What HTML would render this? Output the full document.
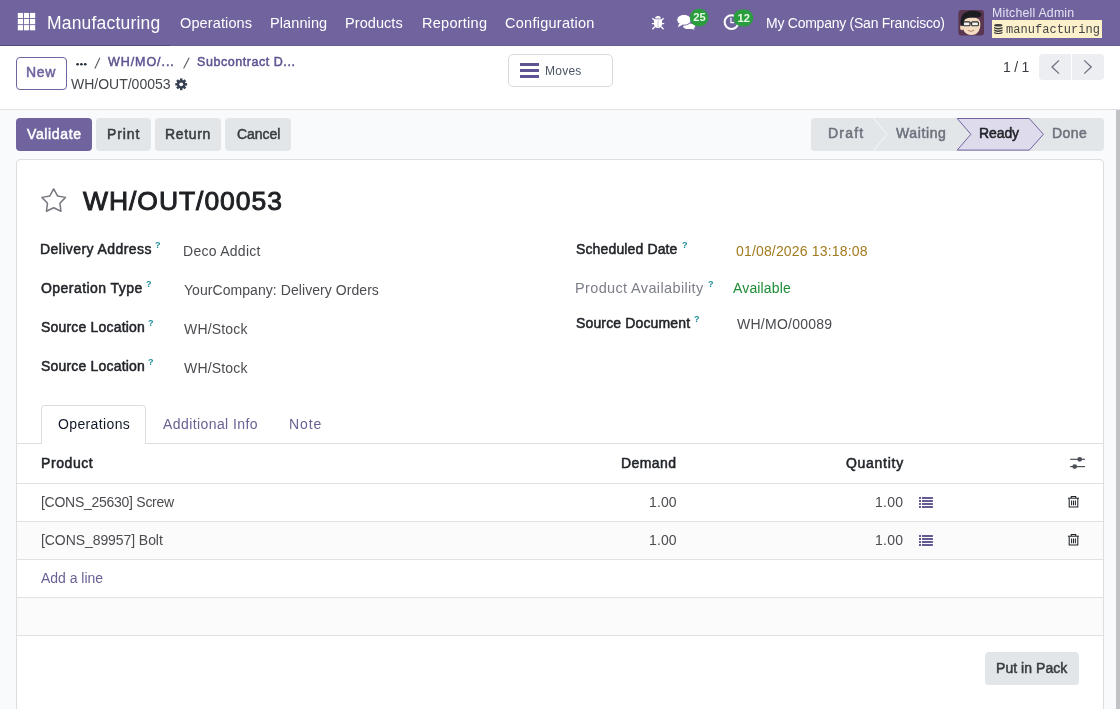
<!DOCTYPE html>
<html><head><meta charset="utf-8">
<style>
*{box-sizing:border-box;margin:0;padding:0}
html,body{width:1120px;height:709px;overflow:hidden;background:#fff;font-family:"Liberation Sans",sans-serif;color:#374151}
.a{position:absolute;white-space:nowrap}
.t{position:absolute;white-space:nowrap}
</style></head><body>

<div class="a" style="left:0;top:0;width:1120px;height:46px;background:#71639e"></div>
<div class="a" style="left:0;top:45px;width:1120px;height:1px;background:#6a5d97"></div>
<div class="a" style="left:0;top:45px;width:170px;height:1px;background:#55487f"></div>
<div class="a" style="left:0;top:109px;width:1120px;height:1px;background:#dfe1e5"></div>
<div class="a" style="left:0;top:110px;width:1116px;height:599px;background:#f9fafb"></div>
<div class="a" style="left:1116px;top:110px;width:4px;height:599px;background:#c1c2c5"></div>
<svg class="a" style="left:0;top:0" width="60" height="46" fill="#fff"><rect x="17.8" y="12.9" width="5.2" height="5.2"/><rect x="17.8" y="19.0" width="5.2" height="5.2"/><rect x="17.8" y="25.1" width="5.2" height="5.2"/><rect x="23.9" y="12.9" width="5.2" height="5.2"/><rect x="23.9" y="19.0" width="5.2" height="5.2"/><rect x="23.9" y="25.1" width="5.2" height="5.2"/><rect x="30.0" y="12.9" width="5.2" height="5.2"/><rect x="30.0" y="19.0" width="5.2" height="5.2"/><rect x="30.0" y="25.1" width="5.2" height="5.2"/></svg>
<svg class="a" style="left:646px;top:10px" width="24" height="24" viewBox="646 10 24 24">
<path d="M655.1 18.6 a2.9 2.5 0 0 1 5.8 0 z" fill="#fff"/>
<path d="M654.0 19.3 h8.0 v4.8 a4.0 3.9 0 0 1 -8.0 0 z" fill="#fff"/>
<line x1="658" y1="20.2" x2="658" y2="27.6" stroke="#b9b2d2" stroke-width="0.8"/>
<g stroke="#fff" stroke-width="1.3" stroke-linecap="butt">
<line x1="651.8" y1="23.6" x2="654.2" y2="23.6"/><line x1="661.8" y1="23.6" x2="664.2" y2="23.6"/>
<line x1="652.4" y1="18.2" x2="654.6" y2="20.4"/><line x1="663.6" y1="18.2" x2="661.4" y2="20.4"/>
<line x1="652.4" y1="29.2" x2="654.8" y2="26.8"/><line x1="663.6" y1="29.2" x2="661.2" y2="26.8"/>
</g></svg>
<svg class="a" style="left:670px;top:6px;will-change:transform" width="45" height="30" viewBox="670 6 45 30">
<path d="M683.5 24.2 C686 23.2 691 23 694 24.6 C696 25.8 695.5 27.6 693.6 28.2 L695 29.6 L690.8 28.9 C688 29.4 684.5 28.8 683.2 27.2 z" fill="#fff"/>
<ellipse cx="684" cy="19.8" rx="7.2" ry="5.4" fill="#fff" stroke="#71639e" stroke-width="0.9"/>
<path d="M679.2 23.6 L677.9 27.2 L683 24.6 z" fill="#fff"/>
<rect x="689.8" y="8.8" width="18.6" height="17.6" rx="8.8" fill="#2a9d3e"/>
<text x="699.6" y="21.1" font-family="Liberation Sans" font-weight="bold" font-size="11.2" fill="#eafbe6" text-anchor="middle">25</text>
</svg>
<svg class="a" style="left:716px;top:6px;will-change:transform" width="42" height="30" viewBox="716 6 42 30">
<circle cx="731.5" cy="22.1" r="6.9" fill="none" stroke="#fff" stroke-width="2"/>
<path d="M730.9 17.8 v4.9 h3.2" fill="none" stroke="#fff" stroke-width="1.15"/>
<rect x="733.4" y="9.6" width="19.8" height="17" rx="8.5" fill="#2a9d3e"/>
<text x="743.7" y="22" font-family="Liberation Sans" font-weight="bold" font-size="11.2" fill="#eafbe6" text-anchor="middle">12</text>
</svg>
<svg class="a" style="left:958px;top:10px" width="26" height="26" viewBox="0 0 26 26">
<rect x="0.4" y="0" width="25.6" height="25.5" rx="3" fill="#5b3651"/>
<ellipse cx="3.9" cy="17.6" rx="1.9" ry="2.6" fill="#f1d6b8"/>
<path d="M4.2 13 C4.2 9 7 7.5 13 7.5 C19.5 7.5 22.3 9 22.3 14 C22.3 20 20 25 13.2 25 C7 25 4.2 20 4.2 13 z" fill="#f4dcc2"/>
<path d="M2.8 14 C2 8 4 2.5 10.5 1.2 C16 0.3 22 1 23.5 4 C24 6 22 7.2 19.5 7.3 C15 7.6 9.5 7.2 7 9.5 C5.8 11 5.4 13 5.3 15.5 L3.4 16 z" fill="#1c1c21"/>
<rect x="5.4" y="11.9" width="6.6" height="3.9" rx="1" fill="#f2f2f2" stroke="#2b2b2b" stroke-width="1.1"/>
<rect x="13.6" y="11.9" width="6.8" height="3.9" rx="1" fill="#f2f2f2" stroke="#2b2b2b" stroke-width="1.1"/>
<line x1="12" y1="13" x2="13.6" y2="13" stroke="#2b2b2b" stroke-width="1"/>
<path d="M9.8 20.3 q3.2 2.2 6.4 0" fill="none" stroke="#a8795f" stroke-width="0.9"/>
</svg>
<div class="a" style="left:991.7px;top:20px;width:110.3px;height:18.3px;background:#fdf1cc"></div>
<svg class="a" style="left:993px;top:23px" width="11" height="12" viewBox="993 23 11 12" fill="#3b3b3b">
<ellipse cx="998.3" cy="25.3" rx="4.2" ry="1.3"/>
<path d="M994.1 26.6 v1.5 c0 .7 1.9 1.3 4.2 1.3 s4.2-.6 4.2-1.3 v-1.5 c0 .7-1.9 1.3-4.2 1.3 s-4.2-.6-4.2-1.3z"/>
<path d="M994.1 29.1 v1.5 c0 .7 1.9 1.3 4.2 1.3 s4.2-.6 4.2-1.3 v-1.5 c0 .7-1.9 1.3-4.2 1.3 s-4.2-.6-4.2-1.3z"/>
<path d="M994.1 31.6 v1.2 c0 .7 1.9 1.3 4.2 1.3 s4.2-.6 4.2-1.3 v-1.2 c0 .7-1.9 1.3-4.2 1.3 s-4.2-.6-4.2-1.3z"/>
</svg>
<div class="a" style="left:16px;top:57px;width:51px;height:33px;border:1px solid #71639e;border-radius:4px"></div>
<svg class="a" style="left:70px;top:55px" width="130" height="20" viewBox="70 55 130 20"><circle cx="77.6" cy="64.3" r="1.3" fill="#1f2937"/><circle cx="81.4" cy="64.3" r="1.3" fill="#1f2937"/><circle cx="85.2" cy="64.3" r="1.3" fill="#1f2937"/><line x1="99.9" y1="57.8" x2="94.9" y2="68.4" stroke="#555a62" stroke-width="1.1"/><line x1="189.2" y1="57.8" x2="183.6" y2="68.4" stroke="#555a62" stroke-width="1.1"/></svg>
<svg class="a" style="left:170px;top:74px" width="22" height="20" viewBox="170 74 22 20"><g fill="#374151"><circle cx="181.2" cy="84.3" r="4.3"/><rect x="179.95" y="78.39999999999999" width="2.5" height="3" transform="rotate(0 181.2 84.3)"/><rect x="179.95" y="78.39999999999999" width="2.5" height="3" transform="rotate(45 181.2 84.3)"/><rect x="179.95" y="78.39999999999999" width="2.5" height="3" transform="rotate(90 181.2 84.3)"/><rect x="179.95" y="78.39999999999999" width="2.5" height="3" transform="rotate(135 181.2 84.3)"/><rect x="179.95" y="78.39999999999999" width="2.5" height="3" transform="rotate(180 181.2 84.3)"/><rect x="179.95" y="78.39999999999999" width="2.5" height="3" transform="rotate(225 181.2 84.3)"/><rect x="179.95" y="78.39999999999999" width="2.5" height="3" transform="rotate(270 181.2 84.3)"/><rect x="179.95" y="78.39999999999999" width="2.5" height="3" transform="rotate(315 181.2 84.3)"/><circle cx="181.2" cy="84.3" r="1.9" fill="#fff"/></g></svg>
<div class="a" style="left:508.4px;top:54.2px;width:104.4px;height:32.4px;border:1px solid #d8dadd;border-radius:5px"></div>
<div class="a" style="left:520.4px;top:63.3px;width:18.2px;height:2.3px;background:#5f5492"></div>
<div class="a" style="left:520.4px;top:69.3px;width:18.2px;height:2.3px;background:#5f5492"></div>
<div class="a" style="left:520.4px;top:75.3px;width:18.2px;height:2.3px;background:#5f5492"></div>
<div class="a" style="left:1039px;top:54px;width:31.8px;height:25.8px;background:#eceef1;border-radius:4px 0 0 4px"></div>
<div class="a" style="left:1071.8px;top:54px;width:31.8px;height:25.8px;background:#eceef1;border-radius:0 4px 4px 0"></div>
<svg class="a" style="left:1040px;top:54px" width="64" height="26" viewBox="1040 54 64 26" fill="none" stroke="#6b7080" stroke-width="1.3"><path d="M1059 60.4 l-7 6.6 l7 6.6"/><path d="M1084.2 60.4 l7 6.6 l-7 6.6"/></svg>
<div class="a" style="left:16px;top:118px;width:76.0px;height:32.8px;background:#71639e;border-radius:4px"></div>
<div class="a" style="left:96px;top:118px;width:54.6px;height:32.8px;background:#e3e6e9;border-radius:4px"></div>
<div class="a" style="left:155.4px;top:118px;width:65.3px;height:32.8px;background:#e3e6e9;border-radius:4px"></div>
<div class="a" style="left:225.3px;top:118px;width:65.6px;height:32.8px;background:#e3e6e9;border-radius:4px"></div>
<div class="a" style="left:811px;top:118px;width:292.6px;height:32.6px;background:#e3e6e9;border-radius:4px"></div>
<svg class="a" style="left:800px;top:110px" width="310" height="50" viewBox="800 110 310 50">
<polyline points="873.6,118 887.1,134.3 873.6,150.6" fill="none" stroke="#f7f8f9" stroke-width="1"/>
<polygon points="957.2,118.5 1029.3,118.5 1043.4,134.3 1029.3,150.1 957.2,150.1 970.9,134.3" fill="#dedbec" stroke="#71639e" stroke-width="1"/>
</svg>
<div class="a" style="left:16px;top:159px;width:1088px;height:553px;background:#fff;border:1px solid #dcdee2;border-radius:4px"></div>
<svg class="a" style="left:36px;top:182px" width="36" height="36" viewBox="36 182 36 36"><polygon points="53.70,188.80 57.52,195.94 65.49,197.37 59.88,203.21 60.99,211.23 53.70,207.70 46.41,211.23 47.52,203.21 41.91,197.37 49.88,195.94" fill="none" stroke="#75787e" stroke-width="1.5" stroke-linejoin="round"/></svg>
<div class="t" style="left:154.70000000000002px;top:238.7px;font-size:9px;font-weight:bold;color:#1a8a96;line-height:12px;will-change:transform">?</div>
<div class="t" style="left:146.1px;top:277.7px;font-size:9px;font-weight:bold;color:#1a8a96;line-height:12px;will-change:transform">?</div>
<div class="t" style="left:148.3px;top:316.8px;font-size:9px;font-weight:bold;color:#1a8a96;line-height:12px;will-change:transform">?</div>
<div class="t" style="left:148.3px;top:356.0px;font-size:9px;font-weight:bold;color:#1a8a96;line-height:12px;will-change:transform">?</div>
<div class="t" style="left:681.6999999999999px;top:238.7px;font-size:9px;font-weight:bold;color:#1a8a96;line-height:12px;will-change:transform">?</div>
<div class="t" style="left:708.1999999999999px;top:277.7px;font-size:9px;font-weight:bold;color:#1a8a96;line-height:12px;will-change:transform">?</div>
<div class="t" style="left:693.9px;top:312.7px;font-size:9px;font-weight:bold;color:#1a8a96;line-height:12px;will-change:transform">?</div>
<div class="a" style="left:17px;top:443px;width:1086px;height:1px;background:#dcdee2"></div>
<div class="a" style="left:41px;top:405.3px;width:104.8px;height:38.7px;border:1px solid #dcdee2;border-bottom:0;background:#fff;border-radius:4px 4px 0 0"></div>
<div class="a" style="left:17px;top:521.5px;width:1086px;height:37.8px;background:#fbfbfb"></div>
<div class="a" style="left:17px;top:597.4px;width:1086px;height:37.8px;background:#fbfbfb"></div>
<div class="a" style="left:17px;top:483px;width:1086px;height:1px;background:#e0e1e4"></div>
<div class="a" style="left:17px;top:521px;width:1086px;height:1px;background:#e0e1e4"></div>
<div class="a" style="left:17px;top:559px;width:1086px;height:1px;background:#e0e1e4"></div>
<div class="a" style="left:17px;top:597px;width:1086px;height:1px;background:#e0e1e4"></div>
<div class="a" style="left:17px;top:635px;width:1086px;height:1px;background:#e0e1e4"></div>
<svg class="a" style="left:1066px;top:452px" width="24" height="20" viewBox="1066 452 24 20">
<g stroke="#4b5058" stroke-width="1.2"><line x1="1070.2" y1="459.3" x2="1085" y2="459.3"/><line x1="1070.2" y1="466.6" x2="1085" y2="466.6"/></g>
<circle cx="1079.7" cy="459.3" r="2.4" fill="#4b5058"/><circle cx="1074.7" cy="466.6" r="2.4" fill="#4b5058"/>
</svg>
<svg class="a" style="left:910px;top:488px" width="30" height="28" viewBox="910 488 30 28" fill="#524b88"><rect x="919" y="497.1" width="2" height="1.8"/><rect x="922" y="497.1" width="10.9" height="1.8"/><rect x="919" y="500.1" width="2" height="1.8"/><rect x="922" y="500.1" width="10.9" height="1.8"/><rect x="919" y="503.1" width="2" height="1.8"/><rect x="922" y="503.1" width="10.9" height="1.8"/><rect x="919" y="506.1" width="2" height="1.8"/><rect x="922" y="506.1" width="10.9" height="1.8"/></svg>
<svg class="a" style="left:1062px;top:490px" width="24" height="22" viewBox="1062 490 24 22" fill="none" stroke="#1f2328" stroke-width="1.05">
<line x1="1067.9" y1="498.2" x2="1079" y2="498.2"/>
<path d="M1071.3 498 v-1.5 h4.4 v1.5"/>
<path d="M1069.2 498.4 v8.6 h8.6 v-8.6"/>
<line x1="1071.6" y1="500.5" x2="1071.6" y2="505.3"/><line x1="1073.5" y1="500.5" x2="1073.5" y2="505.3"/><line x1="1075.4" y1="500.5" x2="1075.4" y2="505.3"/>
</svg>
<svg class="a" style="left:910px;top:526px" width="30" height="28" viewBox="910 526 30 28" fill="#524b88"><rect x="919" y="535.1" width="2" height="1.8"/><rect x="922" y="535.1" width="10.9" height="1.8"/><rect x="919" y="538.1" width="2" height="1.8"/><rect x="922" y="538.1" width="10.9" height="1.8"/><rect x="919" y="541.1" width="2" height="1.8"/><rect x="922" y="541.1" width="10.9" height="1.8"/><rect x="919" y="544.1" width="2" height="1.8"/><rect x="922" y="544.1" width="10.9" height="1.8"/></svg>
<svg class="a" style="left:1062px;top:528px" width="24" height="22" viewBox="1062 528 24 22" fill="none" stroke="#1f2328" stroke-width="1.05">
<line x1="1067.9" y1="536.2" x2="1079" y2="536.2"/>
<path d="M1071.3 536 v-1.5 h4.4 v1.5"/>
<path d="M1069.2 536.4 v8.6 h8.6 v-8.6"/>
<line x1="1071.6" y1="538.5" x2="1071.6" y2="543.3"/><line x1="1073.5" y1="538.5" x2="1073.5" y2="543.3"/><line x1="1075.4" y1="538.5" x2="1075.4" y2="543.3"/>
</svg>
<div class="a" style="left:985.3px;top:652px;width:93.5px;height:32.5px;background:#e3e6e9;border-radius:4px"></div>
<div class="t" style="left:46.55px;top:11.9px;font-family:'Liberation Sans';font-size:17.5px;font-weight:normal;line-height:23px;will-change:transform;letter-spacing:0.187px;color:#fff">Manufacturing</div>
<div class="t" style="left:179.56px;top:13.6px;font-family:'Liberation Sans';font-size:14.5px;font-weight:normal;line-height:19px;will-change:transform;letter-spacing:0.124px;color:#fff">Operations</div>
<div class="t" style="left:269.99px;top:13.6px;font-family:'Liberation Sans';font-size:14.5px;font-weight:normal;line-height:19px;will-change:transform;letter-spacing:0.095px;color:#fff">Planning</div>
<div class="t" style="left:345.09px;top:13.6px;font-family:'Liberation Sans';font-size:14.5px;font-weight:normal;line-height:19px;will-change:transform;letter-spacing:0.064px;color:#fff">Products</div>
<div class="t" style="left:421.89px;top:13.6px;font-family:'Liberation Sans';font-size:14.5px;font-weight:normal;line-height:19px;will-change:transform;letter-spacing:0.26px;color:#fff">Reporting</div>
<div class="t" style="left:505.0px;top:13.6px;font-family:'Liberation Sans';font-size:14.5px;font-weight:normal;line-height:19px;will-change:transform;letter-spacing:0.261px;color:#fff">Configuration</div>
<div class="t" style="left:766.32px;top:13.94px;font-family:'Liberation Sans';font-size:14px;font-weight:normal;line-height:18px;will-change:transform;letter-spacing:-0.251px;color:#fff">My Company (San Francisco)</div>
<div class="t" style="left:991.58px;top:5.42px;font-family:'Liberation Sans';font-size:12.3px;font-weight:normal;line-height:16px;will-change:transform;letter-spacing:0.222px;color:#e6e2f3">Mitchell Admin</div>
<div class="t" style="left:1006.29px;top:21.6px;font-family:'Liberation Mono';font-size:12px;font-weight:normal;line-height:16px;will-change:transform;letter-spacing:0.031px;color:#444444">manufacturing</div>
<div class="t" style="left:26.42px;top:63.45px;font-family:'Liberation Sans';font-size:14px;font-weight:normal;line-height:18px;will-change:transform;-webkit-text-stroke:0.5px #71639e;letter-spacing:0.652px;color:#71639e">New</div>
<div class="t" style="left:108.41px;top:54.45px;font-family:'Liberation Sans';font-size:12.5px;font-weight:normal;line-height:16px;will-change:transform;-webkit-text-stroke:0.5px #5f5492;letter-spacing:0.928px;color:#5f5492">WH/MO/...</div>
<div class="t" style="left:196.53px;top:54.45px;font-family:'Liberation Sans';font-size:12.5px;font-weight:normal;line-height:16px;will-change:transform;-webkit-text-stroke:0.5px #5f5492;letter-spacing:0.55px;color:#5f5492">Subcontract D...</div>
<div class="t" style="left:71.17px;top:74.64px;font-family:'Liberation Sans';font-size:14px;font-weight:normal;line-height:18px;will-change:transform;letter-spacing:-0.008px;color:#44474c">WH/OUT/00053</div>
<div class="t" style="left:544.9px;top:62.6px;font-family:'Liberation Sans';font-size:12px;font-weight:normal;line-height:16px;will-change:transform;letter-spacing:0.247px;color:#4b5563">Moves</div>
<div class="t" style="left:1003.32px;top:58.14px;font-family:'Liberation Sans';font-size:14px;font-weight:normal;line-height:18px;will-change:transform;letter-spacing:-0.254px;color:#383b40">1 / 1</div>
<div class="t" style="left:27.29px;top:124.55px;font-family:'Liberation Sans';font-size:14px;font-weight:normal;line-height:18px;will-change:transform;-webkit-text-stroke:0.5px #fff;letter-spacing:0.639px;color:#fff">Validate</div>
<div class="t" style="left:106.72px;top:124.55px;font-family:'Liberation Sans';font-size:14px;font-weight:normal;line-height:18px;will-change:transform;-webkit-text-stroke:0.5px #383b40;letter-spacing:0.893px;color:#383b40">Print</div>
<div class="t" style="left:165.22px;top:124.55px;font-family:'Liberation Sans';font-size:14px;font-weight:normal;line-height:18px;will-change:transform;-webkit-text-stroke:0.5px #383b40;letter-spacing:0.646px;color:#383b40">Return</div>
<div class="t" style="left:236.6px;top:124.55px;font-family:'Liberation Sans';font-size:14px;font-weight:normal;line-height:18px;will-change:transform;-webkit-text-stroke:0.5px #383b40;letter-spacing:-0.052px;color:#383b40">Cancel</div>
<div class="t" style="left:827.52px;top:124.45px;font-family:'Liberation Sans';font-size:14px;font-weight:normal;line-height:18px;will-change:transform;-webkit-text-stroke:0.5px #6b717c;letter-spacing:1.192px;color:#6b717c">Draft</div>
<div class="t" style="left:896.31px;top:124.45px;font-family:'Liberation Sans';font-size:14px;font-weight:normal;line-height:18px;will-change:transform;-webkit-text-stroke:0.5px #6b717c;letter-spacing:0.619px;color:#6b717c">Waiting</div>
<div class="t" style="left:978.62px;top:124.45px;font-family:'Liberation Sans';font-size:14px;font-weight:normal;line-height:18px;will-change:transform;-webkit-text-stroke:0.5px #212428;letter-spacing:-0.094px;color:#212428">Ready</div>
<div class="t" style="left:1051.82px;top:124.45px;font-family:'Liberation Sans';font-size:14px;font-weight:normal;line-height:18px;will-change:transform;-webkit-text-stroke:0.5px #6b717c;letter-spacing:0.416px;color:#6b717c">Done</div>
<div class="t" style="left:83.28px;top:184.31px;font-family:'Liberation Sans';font-size:26.5px;font-weight:normal;line-height:34px;will-change:transform;-webkit-text-stroke:0.95px #1e2023;letter-spacing:0.943px;color:#1e2023">WH/OUT/00053</div>
<div class="t" style="left:39.92px;top:239.75px;font-family:'Liberation Sans';font-size:14px;font-weight:normal;line-height:18px;will-change:transform;-webkit-text-stroke:0.5px #212428;letter-spacing:0.425px;color:#212428">Delivery Address</div>
<div class="t" style="left:40.63px;top:278.75px;font-family:'Liberation Sans';font-size:14px;font-weight:normal;line-height:18px;will-change:transform;-webkit-text-stroke:0.5px #212428;letter-spacing:0.449px;color:#212428">Operation Type</div>
<div class="t" style="left:40.9px;top:317.85px;font-family:'Liberation Sans';font-size:14px;font-weight:normal;line-height:18px;will-change:transform;-webkit-text-stroke:0.5px #212428;letter-spacing:0.186px;color:#212428">Source Location</div>
<div class="t" style="left:40.9px;top:357.05px;font-family:'Liberation Sans';font-size:14px;font-weight:normal;line-height:18px;will-change:transform;-webkit-text-stroke:0.5px #212428;letter-spacing:0.186px;color:#212428">Source Location</div>
<div class="t" style="left:183.22px;top:241.74px;font-family:'Liberation Sans';font-size:14px;font-weight:normal;line-height:18px;will-change:transform;letter-spacing:0.273px;color:#4a4c50">Deco Addict</div>
<div class="t" style="left:183.76px;top:280.54px;font-family:'Liberation Sans';font-size:14px;font-weight:normal;line-height:18px;will-change:transform;letter-spacing:0.061px;color:#4a4c50">YourCompany: Delivery Orders</div>
<div class="t" style="left:183.57px;top:320.04px;font-family:'Liberation Sans';font-size:14px;font-weight:normal;line-height:18px;will-change:transform;letter-spacing:0.166px;color:#4a4c50">WH/Stock</div>
<div class="t" style="left:183.57px;top:358.84px;font-family:'Liberation Sans';font-size:14px;font-weight:normal;line-height:18px;will-change:transform;letter-spacing:0.166px;color:#4a4c50">WH/Stock</div>
<div class="t" style="left:576.2px;top:239.75px;font-family:'Liberation Sans';font-size:14px;font-weight:normal;line-height:18px;will-change:transform;-webkit-text-stroke:0.5px #212428;letter-spacing:0.136px;color:#212428">Scheduled Date</div>
<div class="t" style="left:575.49px;top:278.9px;font-family:'Liberation Sans';font-size:14.5px;font-weight:normal;line-height:19px;will-change:transform;letter-spacing:0.359px;color:#7c7f89">Product Availability</div>
<div class="t" style="left:576.2px;top:313.55px;font-family:'Liberation Sans';font-size:14px;font-weight:normal;line-height:18px;will-change:transform;-webkit-text-stroke:0.5px #212428;letter-spacing:0.143px;color:#212428">Source Document</div>
<div class="t" style="left:736.4px;top:242.44px;font-family:'Liberation Sans';font-size:14px;font-weight:normal;line-height:18px;will-change:transform;letter-spacing:0.165px;color:#a37a1e">01/08/2026 13:18:08</div>
<div class="t" style="left:732.75px;top:278.94px;font-family:'Liberation Sans';font-size:14px;font-weight:normal;line-height:18px;will-change:transform;letter-spacing:0.149px;color:#1e8c36">Available</div>
<div class="t" style="left:736.77px;top:315.34px;font-family:'Liberation Sans';font-size:14px;font-weight:normal;line-height:18px;will-change:transform;letter-spacing:0.251px;color:#4a4c50">WH/MO/00089</div>
<div class="t" style="left:57.79px;top:415.34px;font-family:'Liberation Sans';font-size:14px;font-weight:normal;line-height:18px;will-change:transform;letter-spacing:0.373px;color:#111827">Operations</div>
<div class="t" style="left:162.65px;top:415.34px;font-family:'Liberation Sans';font-size:14px;font-weight:normal;line-height:18px;will-change:transform;letter-spacing:0.411px;color:#6a6294">Additional Info</div>
<div class="t" style="left:289.02px;top:415.34px;font-family:'Liberation Sans';font-size:14px;font-weight:normal;line-height:18px;will-change:transform;letter-spacing:0.906px;color:#6a6294">Note</div>
<div class="t" style="left:40.52px;top:453.95px;font-family:'Liberation Sans';font-size:14px;font-weight:normal;line-height:18px;will-change:transform;-webkit-text-stroke:0.5px #212428;letter-spacing:0.581px;color:#212428">Product</div>
<div class="t" style="left:621.42px;top:453.95px;font-family:'Liberation Sans';font-size:14px;font-weight:normal;line-height:18px;will-change:transform;-webkit-text-stroke:0.5px #212428;letter-spacing:0.434px;color:#212428">Demand</div>
<div class="t" style="left:845.64px;top:453.95px;font-family:'Liberation Sans';font-size:14px;font-weight:normal;line-height:18px;will-change:transform;-webkit-text-stroke:0.5px #212428;letter-spacing:0.717px;color:#212428">Quantity</div>
<div class="t" style="left:40.9px;top:493.14px;font-family:'Liberation Sans';font-size:14px;font-weight:normal;line-height:18px;will-change:transform;letter-spacing:-0.27px;color:#4a4c50">[CONS_25630] Screw</div>
<div class="t" style="left:648.92px;top:493.34px;font-family:'Liberation Sans';font-size:14px;font-weight:normal;line-height:18px;will-change:transform;letter-spacing:0.136px;color:#4a4c50">1.00</div>
<div class="t" style="left:875.42px;top:493.34px;font-family:'Liberation Sans';font-size:14px;font-weight:normal;line-height:18px;will-change:transform;letter-spacing:0.303px;color:#4a4c50">1.00</div>
<div class="t" style="left:40.9px;top:530.84px;font-family:'Liberation Sans';font-size:14px;font-weight:normal;line-height:18px;will-change:transform;letter-spacing:-0.074px;color:#4a4c50">[CONS_89957] Bolt</div>
<div class="t" style="left:648.92px;top:531.24px;font-family:'Liberation Sans';font-size:14px;font-weight:normal;line-height:18px;will-change:transform;letter-spacing:0.136px;color:#4a4c50">1.00</div>
<div class="t" style="left:875.42px;top:531.24px;font-family:'Liberation Sans';font-size:14px;font-weight:normal;line-height:18px;will-change:transform;letter-spacing:0.303px;color:#4a4c50">1.00</div>
<div class="t" style="left:41.35px;top:569.24px;font-family:'Liberation Sans';font-size:14px;font-weight:normal;line-height:18px;will-change:transform;letter-spacing:-0.029px;color:#6a6296">Add a line</div>
<div class="t" style="left:996.17px;top:658.5px;font-family:'Liberation Sans';font-size:14px;font-weight:normal;line-height:18px;will-change:transform;-webkit-text-stroke:0.5px #383b40;letter-spacing:0.052px;color:#383b40">Put in Pack</div>
</body></html>
